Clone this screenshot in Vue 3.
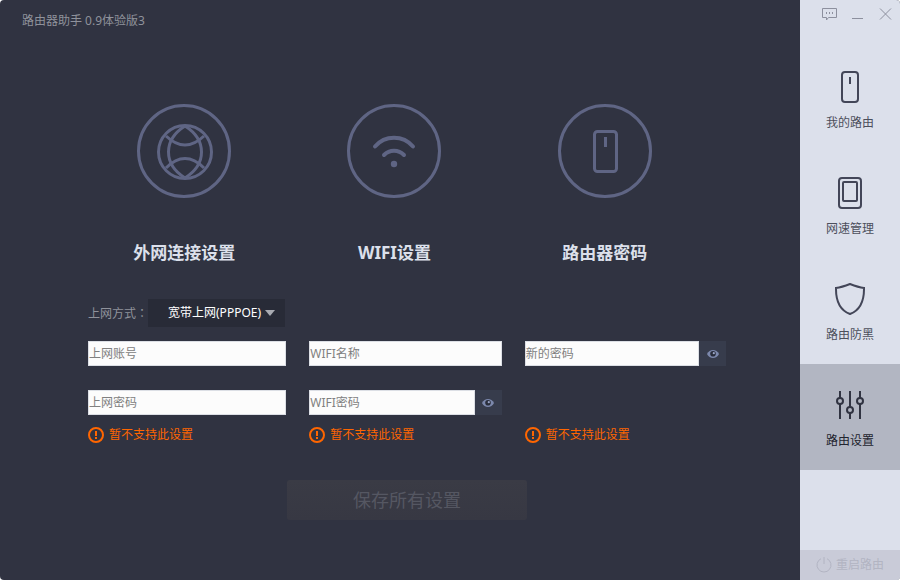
<template>
  <div class="window">
    <main class="main">
      <header class="title-bar">路由器助手 0.9体验版3</header>

      <section class="features">
        <div class="feature">
          <svg class="feature-icon" viewBox="0 0 94 94" aria-hidden="true">
            <circle cx="47" cy="47" r="45.5" />
            <circle cx="48" cy="48" r="26.5" />
            <path d="M48 22C26 36 26 60 48 74" />
            <path d="M48 22C70 36 70 60 48 74" />
            <path d="M29 32Q48 50 67 32" />
            <path d="M29 64Q48 45 67 64" />
          </svg>
          <h2 class="feature-title">外网连接设置</h2>
        </div>
        <div class="feature">
          <svg class="feature-icon" viewBox="0 0 94 94" aria-hidden="true">
            <circle cx="47" cy="47" r="45.5" />
            <path class="wave" d="M28 42.5A25 25 0 0 1 66 42.5" />
            <path class="wave" d="M37 51A14 14 0 0 1 57 51" />
            <circle class="dot" cx="47" cy="60" r="3.2" />
          </svg>
          <h2 class="feature-title">WIFI设置</h2>
        </div>
        <div class="feature">
          <svg class="feature-icon" viewBox="0 0 94 94" aria-hidden="true">
            <circle cx="47" cy="47" r="45.5" />
            <rect x="36.5" y="27.5" width="22" height="40" rx="3" />
            <path d="M47.5 33V43" />
          </svg>
          <h2 class="feature-title">路由器密码</h2>
        </div>
      </section>

      <form class="settings" @submit.prevent>
        <div class="mode-row">
          <label class="mode-label" for="mode">上网方式：</label>
          <div class="select-box">
            <select id="mode" v-model="mode">
              <option v-for="item in modes" :key="item" :value="item">{{ item }}</option>
            </select>
            <svg class="arrow" viewBox="0 0 10 6" aria-hidden="true">
              <path d="M0 0H10L5 6Z" />
            </svg>
          </div>
        </div>

        <div class="columns">
          <div v-for="group in groups" :key="group.key" class="column">
            <div class="fields">
              <div v-for="field in group.fields" :key="field.key" class="field">
                <input
                  v-model="values[field.key]"
                  :type="field.secret && !visible[field.key] ? 'password' : 'text'"
                  :placeholder="field.label"
                  :aria-label="field.label"
                />
                <button
                  v-if="field.secret"
                  type="button"
                  class="eye"
                  aria-label="显示密码"
                  @click="visible[field.key] = !visible[field.key]"
                >
                  <svg viewBox="0 0 12 8" aria-hidden="true">
                    <path d="M0 4C2.5 -1.3 9.5 -1.3 12 4C9.5 9.3 2.5 9.3 0 4Z" />
                    <circle class="pupil" cx="6" cy="3.8" r="2.8" />
                    <circle class="glint" cx="6.8" cy="3.2" r="1.1" />
                  </svg>
                </button>
              </div>
            </div>
            <p class="notice">
              <svg viewBox="0 0 16 16" aria-hidden="true">
                <circle cx="8" cy="8" r="7" />
                <path d="M8 4V9M8 10V12" />
              </svg>
              暂不支持此设置
            </p>
          </div>
        </div>

        <button type="submit" class="save" disabled>保存所有设置</button>
      </form>
    </main>

    <aside class="sidebar">
      <div class="window-controls">
        <button type="button" aria-label="反馈">
          <svg viewBox="0 0 16 16" aria-hidden="true">
            <path d="M1.5 2.5H15.5V11.5H7.5L5.5 14V11.5H1.5Z" />
            <path d="M5.5 6V8M8.5 6V8M11.5 6V8" />
          </svg>
        </button>
        <button type="button" aria-label="最小化">
          <svg viewBox="0 0 16 16" aria-hidden="true">
            <path d="M3 12.5H14" />
          </svg>
        </button>
        <button type="button" aria-label="关闭">
          <svg viewBox="0 0 16 16" aria-hidden="true">
            <path d="M3 2.5L14 13.5M14 2.5L3 13.5" />
          </svg>
        </button>
      </div>

      <nav class="nav">
        <button
          v-for="item in navItems"
          :key="item.key"
          type="button"
          class="nav-item"
          :class="{ active: current === item.key }"
          @click="current = item.key"
        >
          <svg viewBox="0 0 32 32" aria-hidden="true">
            <template v-if="item.key === 'router'">
              <rect x="8" y="1" width="16" height="30" rx="3" />
              <path d="M16 6V13" />
            </template>
            <template v-else-if="item.key === 'speed'">
              <rect x="5" y="1" width="22" height="30" rx="3" />
              <rect x="9" y="5" width="14" height="19" rx="1" />
            </template>
            <template v-else-if="item.key === 'guard'">
              <path d="M16 1C20.5 2.8 25 4.4 30 5C30.2 17 26.5 27 16 31C5.5 27 1.8 17 2 5C7 4.4 11.5 2.8 16 1Z" />
            </template>
            <template v-else>
              <path d="M6 2V9M6 15V30M16 2V18M16 24V30M26 2V9M26 15V30" />
              <circle cx="6" cy="12" r="3" />
              <circle cx="16" cy="21" r="3" />
              <circle cx="26" cy="12" r="3" />
            </template>
          </svg>
          <span>{{ item.label }}</span>
        </button>
      </nav>

      <button type="button" class="restart">
        <svg viewBox="0 0 16 16" aria-hidden="true">
          <path d="M5 1.7A7 7 0 1 0 11 1.7" />
          <path d="M8 0V7" />
        </svg>
        重启路由
      </button>
    </aside>
  </div>
</template>

<script setup>
import { reactive, ref } from 'vue'

const modes = ['宽带上网(PPPOE)', '动态IP(DHCP)', '静态IP']
const mode = ref(modes[0])

const groups = [
  {
    key: 'wan',
    fields: [
      { key: 'account', label: '上网账号' },
      { key: 'wanPassword', label: '上网密码' }
    ]
  },
  {
    key: 'wifi',
    fields: [
      { key: 'ssid', label: 'WIFI名称' },
      { key: 'wifiPassword', label: 'WIFI密码', secret: true }
    ]
  },
  {
    key: 'admin',
    fields: [{ key: 'adminPassword', label: '新的密码', secret: true }]
  }
]

const values = reactive({})
const visible = reactive({})

const navItems = [
  { key: 'router', label: '我的路由' },
  { key: 'speed', label: '网速管理' },
  { key: 'guard', label: '路由防黑' },
  { key: 'settings', label: '路由设置' }
]
const current = ref('settings')
</script>

<style>
body {
  margin: 0;
  background: #fff;
}
</style>

<style scoped>
.window {
  display: flex;
  min-height: 100vh;
  border-radius: 4px;
  overflow: hidden;
  font-family: 'Noto Sans', 'Noto Sans CJK SC', sans-serif;
  font-size: 12px;
  line-height: 20px;
  background: #303341;
}

.window * {
  box-sizing: border-box;
}

button,
input,
select {
  margin: 0;
  padding: 0;
  border: none;
  border-radius: 0;
  font: inherit;
}

button {
  cursor: pointer;
}

svg {
  display: block;
  flex-shrink: 0;
  fill: none;
}

.main {
  flex: 1;
  min-width: 0;
}

.title-bar {
  padding: 11px 22px 9px;
  color: #8f929b;
}

.features {
  display: grid;
  grid-template-columns: repeat(3, 1fr);
  padding: 64px 90px 0 79px;
}

.feature {
  display: flex;
  flex-direction: column;
  align-items: center;
}

.feature-icon {
  width: 94px;
  height: 94px;
  stroke: #5f6584;
  stroke-width: 3;
}

.feature-icon .wave {
  stroke-width: 4;
  stroke-linecap: round;
}

.feature-icon .dot {
  fill: #5f6584;
  stroke: none;
}

.feature-title {
  margin: 43px 0 0;
  font-size: 17px;
  font-weight: 700;
  line-height: 24px;
  color: #dce0eb;
}

.settings {
  padding: 34px 74px 0 88px;
}

.mode-row {
  display: flex;
  align-items: center;
}

.mode-label {
  font-family: 'Noto Sans CJK TC', sans-serif;
  color: #8f929b;
}

.select-box {
  position: relative;
}

.select-box select {
  width: 137px;
  height: 28px;
  padding: 0 20px;
  appearance: none;
  background: #282b37;
  color: #fff;
}

.arrow {
  position: absolute;
  top: 11px;
  right: 10px;
  width: 10px;
  height: 6px;
  fill: #a9abb2;
  pointer-events: none;
}

.columns {
  display: grid;
  grid-template-columns: minmax(0, 198fr) minmax(0, 192fr) minmax(0, 201fr);
  column-gap: 23px;
  margin-top: 14px;
}

.column {
  display: flex;
  flex-direction: column;
  justify-content: space-between;
}

.fields {
  display: flex;
  flex-direction: column;
  gap: 24px;
}

.field {
  display: flex;
}

.field input {
  flex: 1;
  min-width: 0;
  height: 25px;
  border: 1px solid #dcdfe5;
  background: #fcfcfc;
  color: #333;
}

.field input::placeholder {
  color: #808080;
  opacity: 1;
}

.eye {
  display: flex;
  align-items: center;
  justify-content: center;
  width: 27px;
  background: #373c4c;
}

.eye svg {
  width: 12px;
  height: 8px;
  fill: #7c88ac;
}

.eye .pupil {
  fill: #292d3b;
}

.eye .glint {
  fill: #9aa5c5;
}

.notice {
  display: flex;
  align-items: center;
  gap: 5px;
  margin: 10px 0 0;
  color: #ff6600;
}

.notice svg {
  width: 16px;
  height: 16px;
  stroke: currentColor;
  stroke-width: 2;
}

.save {
  display: block;
  width: 240px;
  height: 40px;
  margin: 35px auto 0;
  border-radius: 3px;
  background: linear-gradient(#3a3b45, #373843);
  font-size: 18px;
  color: #555762;
  cursor: default;
}

.sidebar {
  display: flex;
  flex-direction: column;
  width: 100px;
  background: #dce0eb;
}

.window-controls {
  display: flex;
  justify-content: flex-end;
  padding-right: 1px;
}

.window-controls button {
  display: flex;
  align-items: center;
  justify-content: center;
  width: 28px;
  height: 28px;
  background: none;
}

.window-controls svg {
  width: 16px;
  height: 16px;
  stroke: #8d909e;
  stroke-width: 1;
}

.nav {
  display: flex;
  flex-direction: column;
  margin-top: 18px;
}

.nav-item {
  display: flex;
  flex-direction: column;
  align-items: center;
  gap: 10px;
  padding: 25px 0 19px;
  background: none;
  color: #4c4f5c;
}

.nav-item svg {
  width: 32px;
  height: 32px;
  stroke: #434658;
  stroke-width: 2;
}

.nav-item.active {
  background: #b2b6c2;
  color: #22242e;
}

.nav-item.active svg {
  stroke: #303341;
}

.restart {
  display: flex;
  align-items: center;
  justify-content: center;
  gap: 4px;
  height: 30px;
  margin-top: auto;
  background: #c9cbd8;
  color: #b2b4c2;
}

.restart svg {
  width: 16px;
  height: 16px;
  stroke: currentColor;
  stroke-width: 1;
}
</style>
